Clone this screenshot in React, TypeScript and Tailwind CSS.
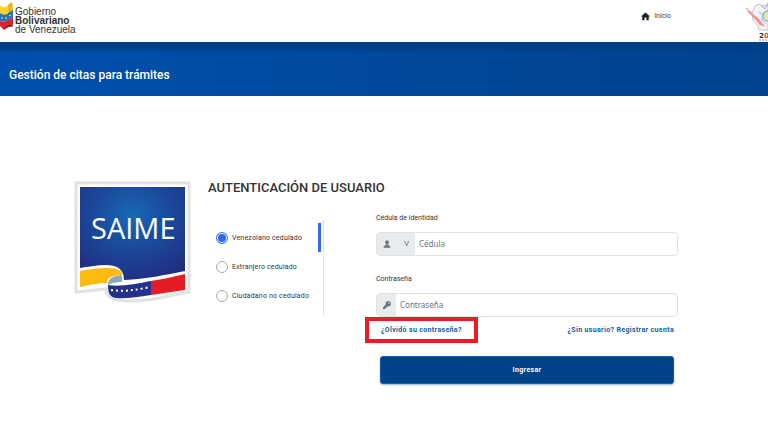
import { FaKey } from "react-icons/fa";
import { MdHome } from "react-icons/md";

function FlagMark() {
  return (
    <svg viewBox="0 0 14 30" className="h-[30px] w-[14px]" aria-hidden="true">
      <path d="M0 3C3 6 6 6 8 3L12 0L13 9C10 10 8 13 5 13C3 13 1 12 0 11Z" fill="#fbd52d" />
      <path d="M8 3L12 0L13 9L8 12Z" fill="#e9b51c" />
      <path d="M0 11C3 13 5 13 7 12L13 8V16C9 17 6 21 0 19Z" fill="#2a71b5" />
      <path d="M0 19C6 21 9 17 13 16V23C9 22 6 26 4 28L0 24Z" fill="#d8232c" />
      <path d="M4 28C5 24 9 22 13 23L12 25C9 24 7 26 4 28Z" fill="#8e1b20" />
      <g fill="#fff">
        <circle cx="2" cy="16" r=".8" />
        <circle cx="6" cy="16" r=".8" />
        <circle cx="10" cy="13.5" r=".8" />
      </g>
    </svg>
  );
}

function BicentennialMark() {
  return (
    <svg viewBox="0 0 24 41" className="h-[41px] w-6" aria-hidden="true">
      <path d="M8 12L10 9L11 6L15 4L18 6L24 5V30H15L14 26L9 20Z" fill="#f4f3f8" stroke="#c3c0d4" />
      <path d="M3 9L6 11L10 15L14 18L19 24L21 27L16 25L11 19L7 15L4 12Z" fill="#f0918e" />
      <path d="M2 9L4 8" stroke="#f0918e" />
      <circle cx="24" cy="16" r="5" fill="#f6e79b" stroke="#8dc5dc" strokeWidth="2" />
      <path d="M15 12L18 14L18 20L22 24" fill="none" stroke="#aeb4d6" />
      <path d="M18 6L21 9L24 3" fill="none" stroke="#aaa4bd" />
      <text x="15" y="38" fontFamily="DejaVu Sans, sans-serif" fontSize="7" fontWeight="700" fill="#2d2a45">2<tspan fill="#a8602c">0</tspan></text>
      <path d="M15 40H24" stroke="#8a889c" strokeDasharray="2 1" />
    </svg>
  );
}

function PersonIcon() {
  return (
    <svg viewBox="0 0 8 8" className="size-2" fill="currentColor" aria-hidden="true">
      <circle cx="4" cy="2.2" r="1.9" />
      <path d="M2.6 4.2H5.4L5.7 5.4C7 5.6 7.4 6.2 7.4 7.7H.6C.6 6.2 1 5.6 2.3 5.4Z" />
    </svg>
  );
}

function SaimeLogo() {
  return (
    <svg viewBox="0 0 118 124" className="h-[124px] w-[118px] shrink-0" role="img" aria-label="SAIME">
      <defs>
        <radialGradient id="saimeBlue" cx="50%" cy="30%" r="75%">
          <stop offset="0" stopColor="#1769b5" />
          <stop offset=".5" stopColor="#1b489a" />
          <stop offset="1" stopColor="#202d80" />
        </radialGradient>
      </defs>
      <path d="M2 3H115V112C96 115 80 121 58 121C42 121 32 119 32 109L2 112Z" fill="#fff" stroke="#e2e2e2" strokeWidth="3" />
      <path d="M6 7H111V91C91 95 72 99 50 100Q50 85 32 85C22 85 14 87 6 88Z" fill="url(#saimeBlue)" />
      <path d="M6 91C17 89 24 88 34 88C44 88 49 91 48 95C40 95 33 97 33 103C25 103 15 105 6 107Z" fill="#fdbb10" />
      <path d="M34 105C34 98 39 96 47 95Q49 97 48 102Q39 102 34 105Z" fill="#8fa9ba" />
      <path d="M34 105C45 107 62 104 77 101V115C63 117 52 119 42 118C35 117 34 112 34 105Z" fill="#22318a" />
      <path d="M77 101C89 99 99 97 111 94V110C99 112 88 113 77 115Z" fill="#e51c25" />
      <path d="M37 110C50 112 62 110 76 107" fill="none" stroke="#fff" strokeWidth="2" strokeDasharray="2 3" />
      <text x="17" y="59" fontFamily="Open Sans, sans-serif" fontSize="29" fontWeight="500" fill="#fff">SAIME</text>
    </svg>
  );
}

const userTypes = ["Venezolano cedulado", "Extranjero cedulado", "Ciudadano no cedulado"];

export default function App() {
  return (
    <div className="min-h-screen overflow-x-hidden bg-white font-[Roboto,sans-serif] text-[#333]">
      <header className="flex h-[42px] items-start justify-between">
        <div className="flex items-start pt-[2px]">
          <FlagMark />
          <div className="pt-[5px] pl-px font-['Liberation_Sans',sans-serif] text-[10px] leading-[9px] text-[#333]">
            <p>Gobierno</p>
            <p className="font-bold">Bolivariano</p>
            <p>de Venezuela</p>
          </div>
        </div>
        <div className="flex items-start gap-[73px]">
          <a href="#inicio" className="flex items-center gap-[3px] pt-2 text-[7px] leading-4 text-[#444]">
            <MdHome className="size-[11px] text-[#222]" />
            Inicio
          </a>
          <BicentennialMark />
        </div>
      </header>

      <div className="bg-linear-to-r from-[#0050ae] to-[#00428d]">
        <div className="flex h-[54px] items-center bg-linear-to-b from-[#003f85] from-10% to-transparent to-20% px-[9px] pt-3">
          <h1 className="text-[12px] leading-4 font-medium text-white">Gestión de citas para trámites</h1>
        </div>
      </div>

      <main className="flex pt-[84px] pr-[90px] pl-[74px]">
        <SaimeLogo />
        <form className="min-w-0 flex-1 pl-4" onSubmit={(e) => e.preventDefault()}>
          <h2 className="text-[13px] leading-4 font-medium">AUTENTICACIÓN DE USUARIO</h2>
          <div className="flex pt-3">
            <fieldset aria-label="Tipo de usuario" className="mt-3 flex h-[96px] w-[116px] shrink-0 gap-[2px] border-r border-[#dee2e6] pr-[2px]">
              <div className="flex flex-1 flex-col gap-[17px] pt-3 pl-2">
                {userTypes.map((type, index) => (
                  <label key={type} className="flex h-3 items-center gap-1 text-[7px] tracking-wide whitespace-nowrap">
                    <input
                      type="radio"
                      name="userType"
                      defaultChecked={index === 0}
                      className="size-3 shrink-0 appearance-none rounded-full border border-[#aaa] bg-white checked:border-[#3b86ea] checked:bg-[#2f66ef] checked:shadow-[inset_0_0_0_1px_white]"
                    />
                    {type}
                  </label>
                ))}
              </div>
              <div className="mt-[3px] -ml-3 h-[29px] w-[3px] bg-[#3b66f5]" />
            </fieldset>

            <div className="min-w-0 flex-1 pt-1 pl-[52px]">
              <label htmlFor="cedula" className="block text-[7px] leading-3">Cédula de identidad</label>
              <div className="mt-2 flex h-6 overflow-hidden rounded-[4px] border border-[#dfe1e4] text-[8px] text-[#6c757d]">
                <div className="flex w-[38px] shrink-0 items-center justify-between bg-[#e9ecef] px-[6px]">
                  <PersonIcon />
                  <span className="leading-3">V</span>
                </div>
                <input id="cedula" placeholder="Cédula" className="min-w-0 flex-1 px-1 font-['Noto_Sans',sans-serif] outline-none placeholder:text-[#6c757d]" />
              </div>
              <label htmlFor="password" className="mt-[17px] block text-[7px] leading-3">Contraseña</label>
              <div className="mt-2 flex h-6 overflow-hidden rounded-[4px] border border-[#dfe1e4] text-[8px] text-[#6c757d]">
                <div className="flex w-[19px] shrink-0 items-center justify-center bg-[#e9ecef]">
                  <FaKey className="size-2" />
                </div>
                <input id="password" type="password" placeholder="Contraseña" className="min-w-0 flex-1 px-1 font-['Noto_Sans',sans-serif] outline-none placeholder:text-[#6c757d]" />
              </div>
              <div className="-ml-[11px] flex items-center justify-between pr-1 text-[7px] leading-[18px] font-bold tracking-wider text-[#165c9d]">
                <a href="#recuperar" className="border-4 border-[#ed1c24] px-3">¿Olvidó su contraseña?</a>
                <a href="#registro">¿Sin usuario? Registrar cuenta</a>
              </div>
              <div className="pt-3 pr-1 pl-1">
                <button className="h-7 w-full rounded-[3px] border border-[#0b61b4] bg-[#004187] text-[7px] font-bold tracking-wider text-white shadow-[0_1px_2px_#00418766]">Ingresar</button>
              </div>
            </div>
          </div>
        </form>
      </main>
    </div>
  );
}
